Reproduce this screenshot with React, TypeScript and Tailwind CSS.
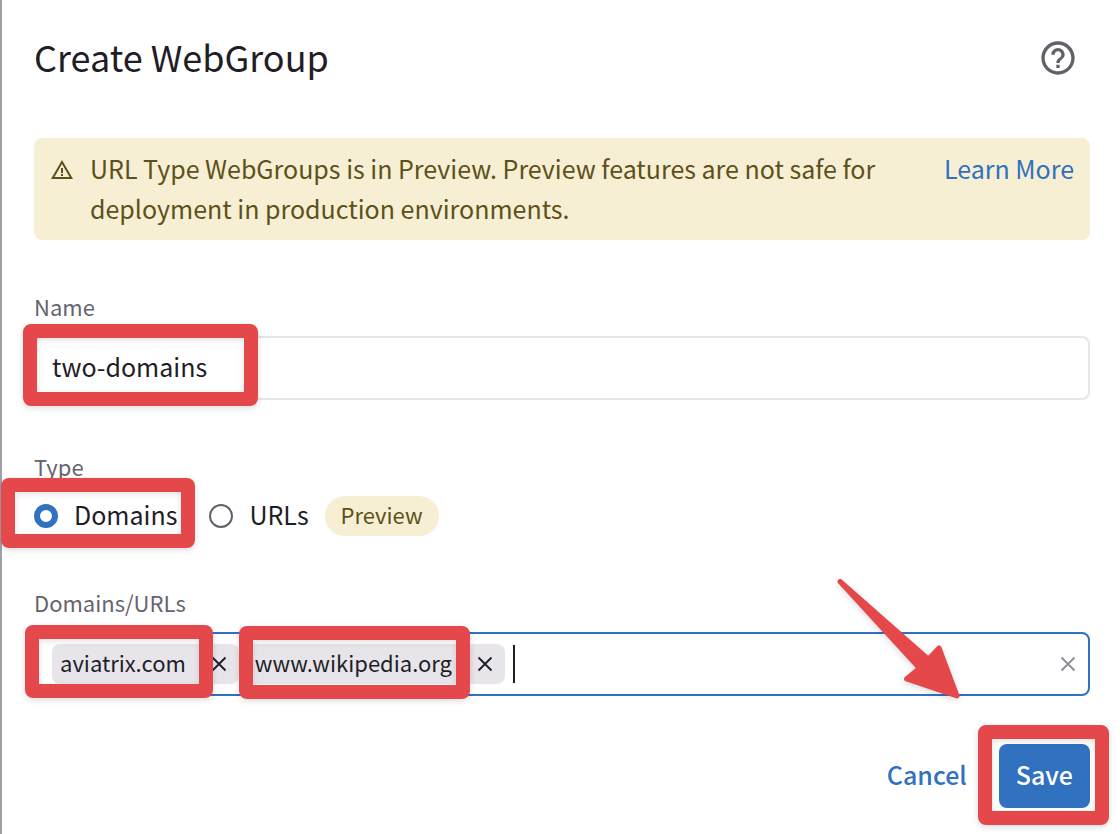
import { ReactNode, useState } from "react";
import { MdHelpOutline, MdWarningAmber } from "react-icons/md";

function Cross({ className = "" }: { className?: string }) {
  return (
    <svg viewBox="0 0 24 24" className={`size-6 ${className}`} fill="none" stroke="currentColor" strokeWidth="1.9" aria-hidden="true">
      <path d="M5.5 5.5l13 13M18.5 5.5l-13 13" />
    </svg>
  );
}

function Highlight({ className }: { className: string }) {
  return (
    <span
      aria-hidden="true"
      className={`pointer-events-none absolute z-10 rounded-lg border-14 border-[#e4484a] shadow-[0_2px_6px_rgba(0,0,0,0.14),inset_0_2px_6px_rgba(0,0,0,0.12)] ${className}`}
    />
  );
}

function Arrow() {
  return (
    <svg
      viewBox="0 0 124 124"
      aria-hidden="true"
      className="pointer-events-none absolute right-[129px] -top-[56px] z-20 h-[124px] w-[124px] overflow-visible drop-shadow-[0_2px_3px_rgba(0,0,0,0.15)]"
    >
      <path
        d="M5 3.5L93.3 81.2L104 70L122 118L71.500 101L84.500 90.300Z"
        fill="#e4484a"
        stroke="#e4484a"
        strokeWidth="5"
        strokeLinejoin="round"
      />
    </svg>
  );
}

function Chip({ children, highlight, onRemove }: { children: string; highlight: string; onRemove: () => void }) {
  return (
    <span className="relative flex h-10 items-center gap-[21px] rounded-lg bg-[#e7e5ea] px-2">
      <span className="pb-1 text-[22px] leading-7">{children}</span>
      <button type="button" aria-label={`Remove ${children}`} onClick={onRemove}>
        <Cross />
      </button>
      <Highlight className={highlight} />
    </span>
  );
}

function Radio({ value, checked, onChange, children }: { value: string; checked: boolean; onChange: () => void; children?: ReactNode }) {
  return (
    <label className="relative flex items-center gap-4">
      <input
        type="radio"
        name="type"
        value={value}
        checked={checked}
        onChange={onChange}
        className="size-6 appearance-none rounded-full border-2 border-[#62616b] checked:border-6 checked:border-[#3071c0]"
      />
      <span className="pb-1 leading-9">{value}</span>
      {children}
    </label>
  );
}

const labelStyle = "text-[22px] leading-7 text-[#65646e]";

const highlights: Record<string, string> = {
  "aviatrix.com": "-top-[19px] -bottom-[14px] -left-[27px] right-[26px]",
  "www.wikipedia.org": "-top-[18px] -bottom-[15px] -left-2 right-[35px]",
};

export default function App() {
  const [type, setType] = useState("Domains");
  const [domains, setDomains] = useState(["aviatrix.com", "www.wikipedia.org"]);

  return (
    <main className="min-h-screen border-l-2 border-[#a09fa7] bg-white pt-[30px] pr-[30px] pb-[26px] pl-8 font-['Noto_Sans_CJK_JP','Noto_Sans_CJK_SC',sans-serif] text-[25px] leading-10 text-[#1f1e27]">
      <form className="flex flex-col" onSubmit={(e) => e.preventDefault()}>
        <div className="flex flex-col gap-13">
          <header className="flex items-center justify-between pr-3">
            <h1 className="pb-1 text-4xl leading-13">Create WebGroup</h1>
            <button type="button" aria-label="Help" className="text-[#62616b]">
              <MdHelpOutline className="size-10" />
            </button>
          </header>

          <div role="status" className="flex items-start gap-4 rounded-lg bg-[#f7efd4] px-4 pt-[10px] pb-3 text-[#5d5119]">
            <MdWarningAmber className="mt-[10px] size-6 shrink-0" />
            <p className="flex-1 pr-8">
              URL Type WebGroups is in Preview. Preview features are not safe for deployment in production environments.
            </p>
            <a href="#learn-more" className="shrink-0 text-[#3071c0]">
              Learn More
            </a>
          </div>

          <div className="relative flex flex-col gap-4">
            <label htmlFor="name" className={labelStyle}>
              Name
            </label>
            <input
              id="name"
              type="text"
              defaultValue="two-domains"
              className="h-16 w-full rounded-lg border-2 border-[#e7e5ea] px-4 pb-1 outline-none"
            />
            <Highlight className="-bottom-[6px] -left-[11px] h-[82px] w-[235px]" />
          </div>

          <fieldset>
            <legend className={`mb-4 ${labelStyle}`}>Type</legend>
            <div className="flex h-10 items-center gap-8">
              <Radio value="Domains" checked={type === "Domains"} onChange={() => setType("Domains")}>
                <Highlight className="-top-[18px] -right-[18px] -bottom-[12px] -left-[33px]" />
              </Radio>
              <div className="flex items-center gap-4">
                <Radio value="URLs" checked={type === "URLs"} onChange={() => setType("URLs")} />
                <span className="rounded-full bg-[#f7efd4] px-4 pb-1 text-[22px] leading-9 text-[#5d5119]">Preview</span>
              </div>
            </div>
          </fieldset>

          <div className="flex flex-col gap-4">
            <label htmlFor="domains" className={labelStyle}>
              Domains/URLs
            </label>
            <div className="relative flex h-16 items-center gap-2 rounded-lg border-2 border-[#3071c0] pr-2 pl-4">
              {domains.map((d) => (
                <Chip key={d} highlight={highlights[d]} onRemove={() => setDomains(domains.filter((x) => x !== d))}>
                  {d}
                </Chip>
              ))}
              <span aria-hidden="true" className="h-[38px] w-[2px] bg-[#1f1e27]" />
              <input id="domains" type="text" className="min-w-0 flex-1 outline-none" />
              <button type="button" aria-label="Clear all" onClick={() => setDomains([])} className="text-[#8f8e95]">
                <Cross />
              </button>
              <Arrow />
            </div>
          </div>
        </div>

        <div className="mt-12 flex justify-end gap-4 font-medium">
          <button type="button" className="h-16 px-4 pb-1 text-[#3071c0]">
            Cancel
          </button>
          <div className="relative">
            <button type="submit" className="h-16 rounded-lg bg-[#3071c0] px-[17px] pb-1 text-white">
              Save
            </button>
            <Highlight className="-top-[19px] -right-[19px] -bottom-[17px] -left-[21px]" />
          </div>
        </div>
      </form>
    </main>
  );
}
